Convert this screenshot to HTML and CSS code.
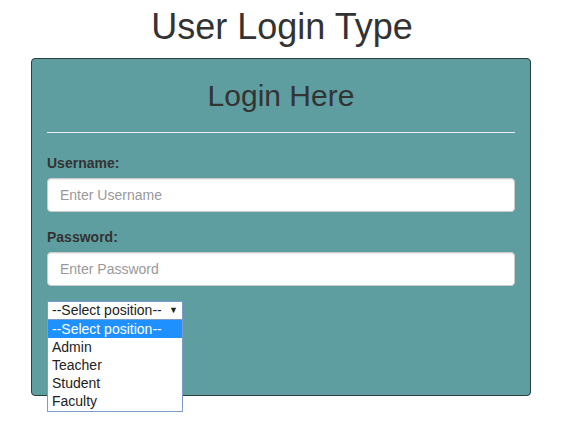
FILE: index.html
```html
<!doctype html>
<html lang="en">
  <head>
    <meta charset="UTF-8" />
    <meta name="viewport" content="width=device-width, initial-scale=1.0" />
    <title>User Login Type</title>
    <link rel="stylesheet" href="styles.css">
  </head>
  <body>
    <h1 class="pageTitle">User Login Type</h1>

    <div class="loginPanel">
      <h2>Login Here</h2>
      <hr />
      <form>
        <div class="formGroup">
          <label for="username">Username:</label>
          <input type="text" id="username" class="formControl" placeholder="Enter Username" />
        </div>
        <div class="formGroup">
          <label for="password">Password:</label>
          <input type="password" id="password" class="formControl" placeholder="Enter Password" />
        </div>

        <!-- Position picker, drawn open -->
        <div class="positionSelect">
          <div class="selectBox">
            <span>--Select position--</span>
            <span class="selectArrow">&#9660;</span>
          </div>
          <ul class="selectList">
            <li class="selected">--Select position--</li>
            <li>Admin</li>
            <li>Teacher</li>
            <li>Student</li>
            <li>Faculty</li>
          </ul>
        </div>
      </form>
    </div>
  </body>
</html>
```

FILE: styles.css
```css
/* Base Reset & Styles */
* {
  box-sizing: border-box;
}
html,
body {
  min-height: 100vh;
}
body {
  margin: 0;
  font-family: "Liberation Sans", Arial, sans-serif;
  font-size: 14px;
  line-height: 20px;
  color: #333;
  background-color: #fff;
}
.pageTitle {
  font-size: 36px;
  font-weight: normal;
  line-height: 40px;
  text-align: center;
  margin: 0;
  padding: 7px 0 11px;
}
.loginPanel {
  width: 500px;
  height: 338px;
  margin-left: 31px;
  padding: 0 15px;
  background-color: #5f9ea0;
  border: 1px solid #2b3f40;
  border-radius: 4px;
}
.loginPanel h2 {
  font-size: 30px;
  font-weight: normal;
  line-height: 33px;
  text-align: center;
  margin: 20px 0 0;
}
.loginPanel hr {
  margin: 20px 0;
  border: 0;
  border-top: 1px solid #eee;
}
.formGroup {
  margin-bottom: 15px;
}
.formGroup label {
  display: block;
  font-weight: bold;
  margin-bottom: 5px;
}
.formControl {
  display: block;
  width: 100%;
  height: 34px;
  padding: 6px 12px;
  font-family: inherit;
  font-size: 14px;
  color: #555;
  background-color: #fff;
  border: 1px solid #ccc;
  border-radius: 4px;
  box-shadow: inset 0 1px 1px rgba(0, 0, 0, 0.075);
}
.formControl::placeholder {
  color: #999;
}
/* Select drawn in its open state */
.positionSelect {
  position: relative;
  width: 136px;
}
.selectBox {
  display: flex;
  justify-content: space-between;
  align-items: center;
  height: 19px;
  padding: 0 4px;
  background-color: #fff;
  border: 1px solid #7a9cc6;
  font-size: 14px;
  line-height: 17px;
  color: #222;
}
.selectArrow {
  font-size: 9px;
  color: #222;
}
.selectList {
  position: absolute;
  top: 19px;
  left: 0;
  width: 136px;
  margin: 0;
  padding: 0 0 1px;
  list-style: none;
  background-color: #fff;
  border: 1px solid #7a9cc6;
  border-top: 0;
}
.selectList li {
  height: 18px;
  padding: 0 4px;
  font-size: 14px;
  line-height: 18px;
  color: #222;
}
.selectList li.selected {
  background-color: #1e90ff;
  color: #fff;
}
```
